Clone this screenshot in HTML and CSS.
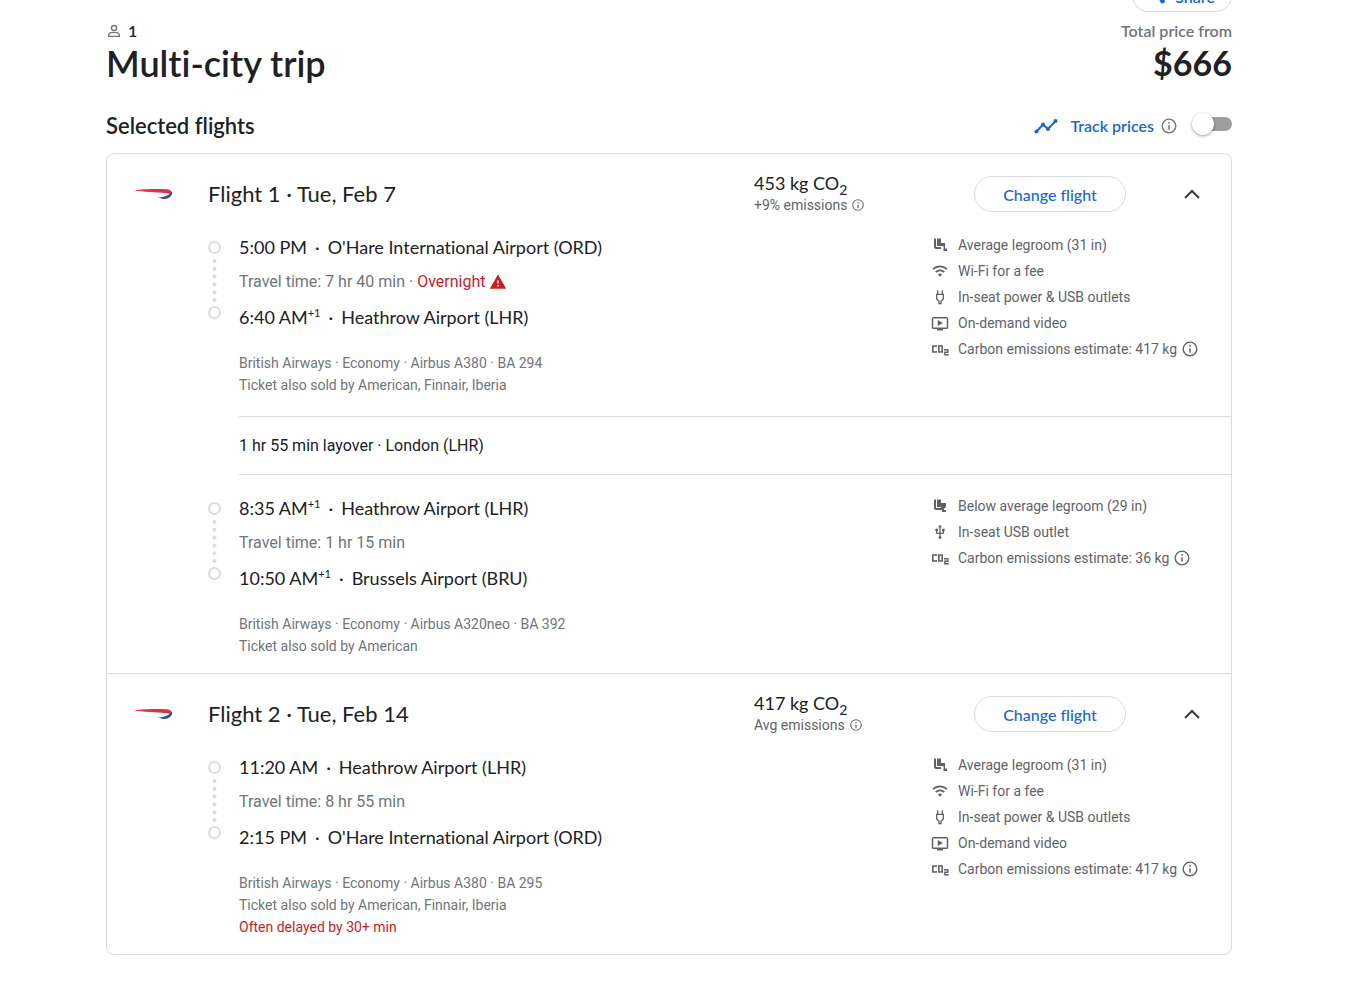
FILE: index.html
```
<!DOCTYPE html>
<html lang="en">

    <head>
        <meta charset="UTF-8">
        <meta name="viewport" content="width=device-width, initial-scale=1.0">
        <title>Multi-city trip</title>
        <link rel="stylesheet" href="styles.css">
    </head>

    <body>
        <!-- Shared icons -->
        <svg class="sprite" aria-hidden="true">
            <symbol id="info" viewBox="0 0 24 24">
                <path d="M11 7h2v2h-2zm0 4h2v6h-2zm1-9a10 10 0 1 0 0 20 10 10 0 0 0 0-20zm0 18.200a8.200 8.200 0 1 1 0-16.400 8.200 8.200 0 0 1 0 16.400z" />
            </symbol>
            <symbol id="chevron" viewBox="0 0 24 24">
                <path d="M5 16l7-7 7 7" fill="none" stroke="currentColor" stroke-width="2.200" />
            </symbol>
            <symbol id="legroom" viewBox="0 0 16 16">
                <path d="M2 1.500h2V10h5v2H4a2 2 0 0 1-2-2z" />
                <path d="M5 1.500h4V6h4v5.500h2V14h-3.500V9H5z" />
            </symbol>
            <symbol id="legroom-below" viewBox="0 0 16 16">
                <path d="M2 1.500h2V10h5v2H4a2 2 0 0 1-2-2z" />
                <path d="M5 1.500h4V5h5v4l-2 2v1h2v2h-3.500L9 11.500V9H5z" />
            </symbol>
            <symbol id="wifi" viewBox="0 0 24 24">
                <path d="M1.500 9.200a15 15 0 0 1 21 0M5.500 13.700a9.300 9.300 0 0 1 13 0" fill="none" stroke="currentColor" stroke-width="2.600" />
                <path d="M8.800 17.200a4.600 4.600 0 0 1 6.400 0L12 20.800z" />
            </symbol>
            <symbol id="power" viewBox="0 0 24 24">
                <path d="M8.500 2v6M15.500 2v6M7 8h10v7l-3.500 3.500V22h-3v-3.500L7 15z" fill="none" stroke="currentColor" stroke-width="2" />
            </symbol>
            <symbol id="usb" viewBox="0 0 24 24">
                <path d="M15 7v4h1v2h-3V5h2l-3-4-3 4h2v8H8v-2.070c.7-.37 1.200-1.080 1.200-1.930a2.200 2.200 0 1 0-4.400 0c0 .85.5 1.560 1.200 1.930V13a2 2 0 0 0 2 2h3v3.050a2.200 2.200 0 1 0 2 0V15h3a2 2 0 0 0 2-2v-2h1V7z" />
            </symbol>
            <symbol id="video" viewBox="0 1 24 20">
                <path d="M21 3H3a2 2 0 0 0-2 2v12c0 1.100.9 2 2 2h5v2h8v-2h5a2 2 0 0 0 2-2V5a2 2 0 0 0-2-2zm0 14H3V5h18z" fill-rule="evenodd" />
                <path d="M9 7v8l7-4z" />
            </symbol>
            <symbol id="co2" viewBox="0 0 18 16">
                <path d="M5.200 6V5H1.800v6h3.400v-1M7.800 5h3.400v6H7.800z" fill="none" stroke="currentColor" stroke-width="1.600" />
                <path d="M13 8.700h3.800v2.600h-3v2.500h4" fill="none" stroke="currentColor" stroke-width="1.400" />
            </symbol>
            <symbol id="timeline" viewBox="0 0 13 78">
                <g fill="none" stroke="currentColor" stroke-width="2">
                    <circle cx="6.500" cy="6.500" r="5.500" />
                    <circle cx="6.500" cy="71.500" r="5.500" />
                </g>
                <path d="M6.500 20v39.500" fill="none" stroke="currentColor" stroke-width="4" stroke-linecap="round" stroke-dasharray="0 7.800" />
            </symbol>
            <symbol id="airline" viewBox="0 0 40 12">
                <path d="M1 2.300C10 .8 28 .6 34 1.200c5 .8 6.500 4.300 4 6.300-.5-1.800-2.500-2.300-6-2.600C23 4.300 10 4.200 1 2.300z" fill="#d8344a" />
                <path d="M38.500 4.500c1 3.500-3 6.500-7 6.500-2 0-4.500-.6-6.500-1.500 5.500-.2 10-1.400 13.500-5z" fill="#2b4e91" />
            </symbol>
        </svg>

        <main class="page">
            <header class="trip-header">
                <button class="pill share" type="button">
                    <svg class="icon-18" viewBox="0 0 24 24" aria-hidden="true">
                        <path d="M18 5L6 12l12 7" fill="none" stroke="currentColor" stroke-width="2" />
                        <circle cx="18" cy="5" r="3" />
                        <circle cx="6" cy="12" r="3" />
                        <circle cx="18" cy="19" r="3" />
                    </svg>
                    Share
                </button>
                <div class="trip-meta">
                    <span class="passengers">
                        <svg class="icon-16" viewBox="0 0 24 24" aria-hidden="true">
                            <g fill="none" stroke="currentColor" stroke-width="2">
                                <circle cx="12" cy="7.500" r="3.800" />
                                <path d="M4 20v-2c0-2.500 4-4 8-4s8 1.500 8 4v2z" />
                            </g>
                        </svg>
                        1
                    </span>
                    <span class="price-label">Total price from</span>
                </div>
                <div class="trip-title">
                    <h1>Multi-city trip</h1>
                    <span class="price">$666</span>
                </div>
            </header>

            <div class="section-header">
                <h2>Selected flights</h2>
                <div class="track">
                    <svg class="icon-24" viewBox="0 0 24 24" aria-hidden="true">
                        <path d="M2.500 17.500l6.500-7 5 4.500 7.500-8" fill="none" stroke="currentColor" stroke-width="2" />
                        <circle cx="2.500" cy="17.500" r="2" />
                        <circle cx="9" cy="10.500" r="2" />
                        <circle cx="14" cy="15" r="2" />
                        <circle cx="21.500" cy="7" r="2" />
                    </svg>
                    <label for="trackPrices">Track prices</label>
                    <svg class="info icon-18"><use href="#info" /></svg>
                    <input class="switch" id="trackPrices" type="checkbox" role="switch">
                </div>
            </div>

            <div class="flights">
                <section class="flight">
                    <div class="flight-header">
                        <svg class="airline" role="img" aria-label="British Airways"><use href="#airline" /></svg>
                        <h3>Flight 1 · Tue, Feb 7</h3>
                        <div class="emissions">
                            <div class="emissions-total">453 kg CO<sub>2</sub></div>
                            <div class="emissions-note">+9% emissions <svg class="icon-14"><use href="#info" /></svg></div>
                        </div>
                        <button class="pill change" type="button">Change flight</button>
                        <button class="toggle" type="button" aria-label="Collapse flight 1"><svg class="icon-24"><use href="#chevron" /></svg></button>
                    </div>

                    <div class="leg">
                        <svg class="timeline" aria-hidden="true"><use href="#timeline" /></svg>
                        <div class="leg-info">
                            <div class="stop"><span>5:00 PM</span><span>·</span><span>O'Hare International Airport (ORD)</span></div>
                            <div class="travel">Travel time: 7 hr 40 min · <span class="warn">Overnight</span>
                                <svg class="warn icon-18" viewBox="0 0 24 24" aria-hidden="true"><path d="M1 21h22L12 2zm12-3h-2v-2h2zm0-4h-2v-4h2z" fill-rule="evenodd" /></svg>
                            </div>
                            <div class="stop"><span>6:40 AM<sup>+1</sup></span><span>·</span><span>Heathrow Airport (LHR)</span></div>
                            <div class="carrier">
                                <div>British Airways · Economy · Airbus A380 · BA 294</div>
                                <div>Ticket also sold by American, Finnair, Iberia</div>
                            </div>
                        </div>
                        <ul class="amenities">
                            <li><svg><use href="#legroom" /></svg>Average legroom (31 in)</li>
                            <li><svg><use href="#wifi" /></svg>Wi-Fi for a fee</li>
                            <li><svg><use href="#power" /></svg>In-seat power &amp; USB outlets</li>
                            <li><svg><use href="#video" /></svg>On-demand video</li>
                            <li><svg><use href="#co2" /></svg>Carbon emissions estimate: 417 kg <svg class="icon-18"><use href="#info" /></svg></li>
                        </ul>
                    </div>

                    <div class="layover">1 hr 55 min layover · London (LHR)</div>

                    <div class="leg">
                        <svg class="timeline" aria-hidden="true"><use href="#timeline" /></svg>
                        <div class="leg-info">
                            <div class="stop"><span>8:35 AM<sup>+1</sup></span><span>·</span><span>Heathrow Airport (LHR)</span></div>
                            <div class="travel">Travel time: 1 hr 15 min</div>
                            <div class="stop"><span>10:50 AM<sup>+1</sup></span><span>·</span><span>Brussels Airport (BRU)</span></div>
                            <div class="carrier">
                                <div>British Airways · Economy · Airbus A320neo · BA 392</div>
                                <div>Ticket also sold by American</div>
                            </div>
                        </div>
                        <ul class="amenities">
                            <li><svg><use href="#legroom-below" /></svg>Below average legroom (29 in)</li>
                            <li><svg><use href="#usb" /></svg>In-seat USB outlet</li>
                            <li><svg><use href="#co2" /></svg>Carbon emissions estimate: 36 kg <svg class="icon-18"><use href="#info" /></svg></li>
                        </ul>
                    </div>
                </section>

                <section class="flight">
                    <div class="flight-header">
                        <svg class="airline" role="img" aria-label="British Airways"><use href="#airline" /></svg>
                        <h3>Flight 2 · Tue, Feb 14</h3>
                        <div class="emissions">
                            <div class="emissions-total">417 kg CO<sub>2</sub></div>
                            <div class="emissions-note">Avg emissions <svg class="icon-14"><use href="#info" /></svg></div>
                        </div>
                        <button class="pill change" type="button">Change flight</button>
                        <button class="toggle" type="button" aria-label="Collapse flight 2"><svg class="icon-24"><use href="#chevron" /></svg></button>
                    </div>

                    <div class="leg">
                        <svg class="timeline" aria-hidden="true"><use href="#timeline" /></svg>
                        <div class="leg-info">
                            <div class="stop"><span>11:20 AM</span><span>·</span><span>Heathrow Airport (LHR)</span></div>
                            <div class="travel">Travel time: 8 hr 55 min</div>
                            <div class="stop"><span>2:15 PM</span><span>·</span><span>O'Hare International Airport (ORD)</span></div>
                            <div class="carrier">
                                <div>British Airways · Economy · Airbus A380 · BA 295</div>
                                <div>Ticket also sold by American, Finnair, Iberia</div>
                                <div class="warn">Often delayed by 30+ min</div>
                            </div>
                        </div>
                        <ul class="amenities">
                            <li><svg><use href="#legroom" /></svg>Average legroom (31 in)</li>
                            <li><svg><use href="#wifi" /></svg>Wi-Fi for a fee</li>
                            <li><svg><use href="#power" /></svg>In-seat power &amp; USB outlets</li>
                            <li><svg><use href="#video" /></svg>On-demand video</li>
                            <li><svg><use href="#co2" /></svg>Carbon emissions estimate: 417 kg <svg class="icon-18"><use href="#info" /></svg></li>
                        </ul>
                    </div>
                </section>
            </div>
        </main>
    </body>

</html>
```

FILE: styles.css
```
* {
    box-sizing: border-box;
}

body {
    margin: 0;
    background: #fff;
    color: #202124;
    font-family: Roboto, Arial, sans-serif;
    font-size: 14px;
    line-height: 22px;
}

h1,
h2,
h3 {
    margin: 0;
    font-weight: 600;
}

h1,
h2,
h3,
button,
.trip-meta,
.price,
.track,
.emissions-total,
.stop {
    font-family: Lato, "Open Sans", sans-serif;
    font-variant-ligatures: none;
}

svg {
    fill: currentColor;
    flex: none;
}

.sprite {
    display: none;
}

.icon-14 {
    width: 14px;
    height: 14px;
}

.icon-16 {
    width: 16px;
    height: 16px;
}

.icon-18 {
    width: 18px;
    height: 18px;
}

.icon-24 {
    width: 24px;
    height: 24px;
}

.page {
    padding: 0 132px 24px 106px;
}

/* Trip header, its top runs under the window edge */
.trip-header {
    display: flex;
    flex-direction: column;
    margin-top: -20px;
}

.pill {
    display: flex;
    align-items: center;
    justify-content: center;
    height: 36px;
    padding: 0 16px;
    background: #fff;
    border: 1px solid #dadce0;
    border-radius: 18px;
    color: #1967d2;
    font-size: 16px;
    font-weight: 600;
    cursor: pointer;
}

.share {
    align-self: flex-end;
    gap: 8px;
    height: 32px;
    margin-bottom: 9px;
}

.trip-meta,
.trip-title,
.section-header {
    display: flex;
    align-items: center;
    justify-content: space-between;
}

.trip-meta {
    font-size: 16px;
    font-weight: 600;
    line-height: 20px;
}

.passengers {
    display: flex;
    align-items: center;
    gap: 6px;
}

.passengers svg,
.price-label {
    color: #70757a;
}

.trip-title {
    font-size: 34px;
    font-weight: 700;
    line-height: 44px;
}

.trip-title h1 {
    font-size: 36px;
}

.section-header {
    height: 40px;
    margin: 21px 0 7px;
}

.section-header h2 {
    font-size: 22px;
}

.track {
    display: flex;
    align-items: center;
    color: #1967d2;
    font-size: 16px;
    font-weight: 600;
}

.track label {
    margin: 0 6px 0 12px;
}

.track .info {
    color: #70757a;
}

.switch {
    appearance: none;
    width: 36px;
    height: 14px;
    margin: 0 0 4px 18px;
    border-radius: 7px;
    background: #9e9e9e;
    cursor: pointer;
}

.switch::before {
    content: "";
    display: block;
    width: 22px;
    height: 22px;
    margin: -4px;
    border-radius: 50%;
    background: #fff;
    box-shadow: 0 1px 3px rgba(0, 0, 0, 0.4);
}

.switch:checked::before {
    margin-left: 18px;
}

/* Flights */
.flights {
    border: 1px solid #dadce0;
    border-radius: 8px;
}

.flight + .flight {
    border-top: 1px solid #dadce0;
}

.flight-header {
    display: grid;
    grid-template-columns: 101px 1fr 220px 194px 48px;
    align-items: center;
    height: 80px;
    padding-right: 15px;
}

.flight-header h3 {
    font-size: 22px;
    font-weight: 400;
}

.airline {
    width: 40px;
    height: 12px;
    margin-left: 26px;
}

.emissions-total {
    font-size: 18px;
}

.emissions-total sub {
    font-size: 14px;
    line-height: 0;
}

.emissions-note {
    display: flex;
    align-items: center;
    gap: 4px;
    color: #5f6368;
    font-size: 14px;
}

.change {
    width: 152px;
    font-weight: 500;
}

.toggle {
    display: grid;
    place-items: center;
    height: 48px;
    padding: 0;
    background: none;
    border: none;
    color: #3c4043;
    cursor: pointer;
}

.leg {
    display: grid;
    grid-template-columns: 31px 1fr 300px;
    margin-left: 101px;
    padding-bottom: 16px;
}

.timeline {
    width: 13px;
    height: 78px;
    margin-top: 7px;
    color: #dadce0;
}

.stop {
    display: flex;
    gap: 8px;
    font-size: 18px;
    line-height: 26px;
}

.stop sup {
    font-size: 11px;
    line-height: 0;
}

.travel {
    display: flex;
    align-items: center;
    gap: 4px;
    margin: 9px 0;
    color: #70757a;
    font-size: 16px;
    line-height: 26px;
}

.warn {
    color: #c5221f;
}

.carrier {
    margin-top: 22px;
    color: #70757a;
}

.carrier .warn {
    color: #c5221f;
}

.layover {
    margin: 4px 0 20px 132px;
    padding: 18px 0 17px;
    border: solid #dadce0;
    border-width: 1px 0;
    font-size: 16px;
}

.amenities {
    display: flex;
    flex-direction: column;
    gap: 4px;
    margin: 0;
    padding: 0;
    list-style: none;
    color: #5f6368;
}

.amenities li {
    display: flex;
    align-items: center;
}

.amenities svg {
    width: 18px;
    height: 16px;
    margin-right: 9px;
}

.amenities .icon-18 {
    height: 18px;
    margin: 0 0 0 4px;
}
```
